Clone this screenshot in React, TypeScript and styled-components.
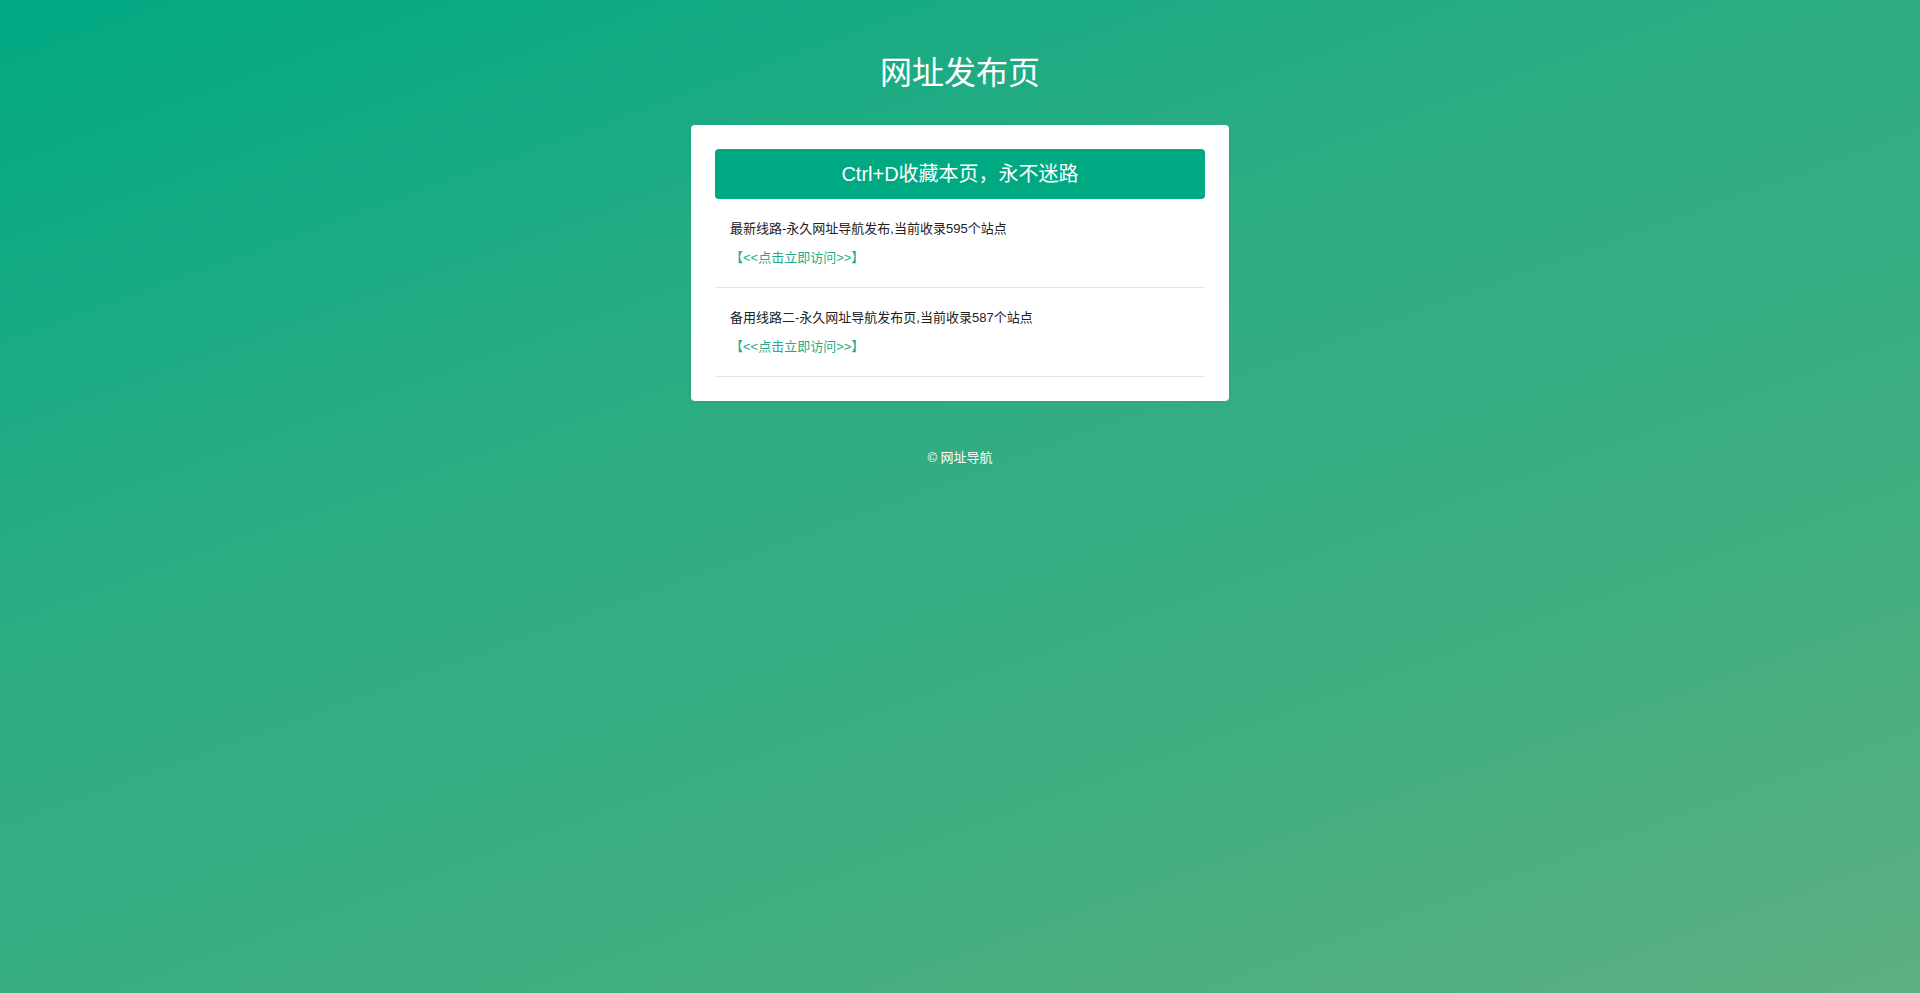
import styled, { createGlobalStyle } from "styled-components";

const GlobalStyle = createGlobalStyle`
	html, body {
		margin: 0;
		padding: 0;
		min-height: 100%;
	}
	body {
		font-family: "Liberation Sans", Arial, "Noto Sans CJK SC", sans-serif;
		background: linear-gradient(160deg, #00a982 0%, #2aac84 35%, #3fae81 70%, #5daf80 100%);
		background-attachment: fixed;
		min-height: 100vh;
	}
`;

interface Site {
	name: string;
	link: string;
}

const sites: Site[] = [
	{ name: "最新线路-永久网址导航发布,当前收录595个站点", link: "【<<点击立即访问>>】" },
	{ name: "备用线路二-永久网址导航发布页,当前收录587个站点", link: "【<<点击立即访问>>】" },
];

export default function App() {
	return (
		<Page>
			<GlobalStyle />
			<Title>网址发布页</Title>
			<Card>
				<Notice>Ctrl+D收藏本页，永不迷路</Notice>
				<List>
					{sites.map((site) => (
						<Item key={site.name}>
							<SiteName>{site.name}</SiteName>
							<SiteLink href="#">{site.link}</SiteLink>
						</Item>
					))}
				</List>
			</Card>
			<Footer>© 网址导航</Footer>
		</Page>
	);
}

const Page = styled.div`
	min-height: 100vh;
	padding-top: 53px;
	box-sizing: border-box;
	display: flex;
	flex-direction: column;
	align-items: center;
`;

const Title = styled.h1`
	margin: 0 0 32px;
	font-size: 32px;
	line-height: 40px;
	font-weight: 400;
	color: #ffffff;
	text-align: center;
`;

const Card = styled.div`
	width: 538px;
	box-sizing: border-box;
	padding: 24px;
	background-color: #ffffff;
	border-radius: 4px;
	box-shadow: 0 1px 3px rgba(0, 0, 0, 0.06);
`;

const Notice = styled.div`
	height: 50px;
	line-height: 50px;
	background-color: #00a982;
	border-radius: 4px;
	color: #ffffff;
	font-size: 20px;
	text-align: center;
`;

const List = styled.ul`
	list-style: none;
	margin: 0;
	padding: 0;
`;

const Item = styled.li`
	padding: 20px 15px 19px;
	border-bottom: 1px solid #e5e5e5;
	display: flex;
	flex-direction: column;
	gap: 9px;
`;

const SiteName = styled.p`
	margin: 0;
	font-size: 13px;
	line-height: 20px;
	color: #222222;
`;

const SiteLink = styled.a`
	font-size: 13px;
	line-height: 20px;
	color: #1fab89;
	text-decoration: none;
`;

const Footer = styled.div`
	margin-top: 47px;
	font-size: 13px;
	line-height: 20px;
	color: #ffffff;
	text-align: center;
`;
